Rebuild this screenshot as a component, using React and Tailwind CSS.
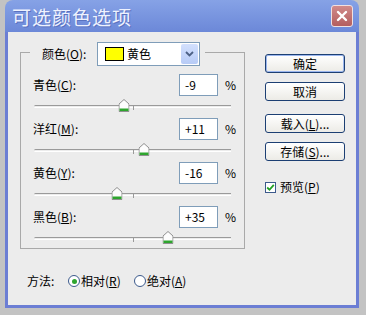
import React from 'react'

const ROWS = [
  { name: '青色', key: 'C', value: -9 },
  { name: '洋红', key: 'M', value: 11 },
  { name: '黄色', key: 'Y', value: -16 },
  { name: '黑色', key: 'B', value: 35 },
]

function Thumb() {
  return (
    <svg width="11" height="13" viewBox="0 0 11 13">
      <path d="M0.5 5 L5.5 0.5 L10.5 5 L10.5 12.5 L0.5 12.5 Z" fill="#fdfdfd" stroke="#8f8f8f" />
      <rect x="1" y="9.5" width="9" height="2.5" fill="#2ea52e" />
    </svg>
  )
}

function Slider({ value }) {
  return (
    <div className="relative ml-[13px] w-[197px] h-[3px] border-t border-b border-t-[#9a9a9a] border-b-white rounded-l-full">
      <div className="absolute left-1/2 top-0 w-px h-[4px] bg-[#9a9a9a]" />
      <div
        className="absolute -top-[7px] -translate-x-1/2 flex"
        style={{ left: `calc(50% + ${value}px)` }}
      >
        <Thumb />
      </div>
    </div>
  )
}

function Button({ children, focus }) {
  return (
    <div
      className={`w-[80px] h-[19px] rounded-[3px] border border-[#1c3f73] bg-gradient-to-b from-white to-[#ecebe6] flex items-center justify-center text-[12px] text-black ${focus ? 'shadow-[inset_0_0_0_1px_#9bb6ee]' : ''}`}
    >
      {children}
    </div>
  )
}

export default function App() {
  return (
    <div className="w-[366px] h-[315px] bg-[#c3c3c3] px-[5px] font-['Noto_Sans_CJK_SC','Noto_Sans',sans-serif] text-black">
      <div className="w-[354px] flex flex-col">
        {/* title bar */}
        <div className="h-[32px] rounded-t-[8px] bg-gradient-to-b from-[#86a2e6] to-[#6c88d8] flex items-center justify-between pl-[7px] pr-[6px]">
          <span className="text-[19px] leading-none text-[#eef2ff] tracking-[1px] [text-shadow:1px_1px_0_#5a72c0]">可选颜色选项</span>
          <div className="w-[22px] h-[22px] rounded-[3px] border border-[#f0e0e0] bg-gradient-to-b from-[#d08a8a] to-[#b45e5e] flex items-center justify-center">
            <svg width="12" height="12" viewBox="0 0 12 12">
              <path d="M2 2 L10 10 M10 2 L2 10" stroke="#fff" strokeWidth="2.4" strokeLinecap="round" />
            </svg>
          </div>
        </div>

        {/* body */}
        <div className="h-[276px] bg-[#ececec] border-x-[3px] border-b-[3px] border-[#6c7ed4] flex text-[12px]">
          <div className="flex flex-col pl-[12px] pt-[20px]">
            {/* group box */}
            <div className="w-[225px] h-[197px] border border-[#a9a9a9] flex flex-col">
              <div className="-mt-[11px] ml-[9px] w-fit bg-[#ececec] flex items-center pl-[12px] pr-[5px] h-[24px]">
                <span className="w-[55px]">颜色(<span className="underline">O</span>):</span>
                <div className="w-[103px] h-[24px] border border-[#7f9db9] bg-white flex items-center pl-[7px] pr-[1px]">
                  <div className="w-[19px] h-[14px] bg-[#ffff00] border border-black" />
                  <span className="ml-[3px] flex-1">黄色</span>
                  <div className="w-[17px] h-[20px] rounded-[2px] bg-gradient-to-b from-[#d3e0fd] to-[#b7cbf6] flex items-center justify-center">
                    <svg width="9" height="6" viewBox="0 0 9 6">
                      <path d="M1 1 L4.5 4.5 L8 1" stroke="#4d6185" strokeWidth="1.8" fill="none" />
                    </svg>
                  </div>
                </div>
              </div>
              <div className="mt-[8px] flex flex-col">
                {ROWS.map(r => (
                  <div key={r.key} className="flex flex-col h-[44px]">
                    <div className="flex items-center h-[22px] pl-[12px]">
                      <span className="w-[146px]">{r.name}(<span className="underline">{r.key}</span>):</span>
                      <div className="w-[39px] h-[22px] border border-[#7f9db9] bg-white flex items-center pl-[5px]">
                        {r.value > 0 ? `+${r.value}` : r.value}
                      </div>
                      <span className="ml-[7px]">%</span>
                    </div>
                    <div className="pt-[9px]">
                      <Slider value={r.value} />
                    </div>
                  </div>
                ))}
              </div>
            </div>

            {/* method */}
            <div className="mt-[25px] flex items-center h-[14px] pl-[7px]">
              <span className="w-[41px]">方法:</span>
              <div className="w-[12px] h-[12px] rounded-full border border-[#3c5a8c] bg-white flex items-center justify-center">
                <div className="w-[5px] h-[5px] rounded-full bg-[#2ea52e]" />
              </div>
              <span className="ml-[1px] w-[53px]">相对(<span className="underline">R</span>)</span>
              <div className="w-[12px] h-[12px] rounded-full border border-[#3c5a8c] bg-white" />
              <span className="ml-[1px]">绝对(<span className="underline">A</span>)</span>
            </div>
          </div>

          {/* buttons */}
          <div className="ml-[20px] pt-[22px] flex flex-col">
            <Button focus>确定</Button>
            <div className="mt-[9px]"><Button>取消</Button></div>
            <div className="mt-[13px]"><Button>载入(<span className="underline">L</span>)...</Button></div>
            <div className="mt-[9px]"><Button>存储(<span className="underline">S</span>)...</Button></div>
            <div className="mt-[17px] flex items-center">
              <div className="w-[11px] h-[11px] border border-[#3c5a8c] bg-white flex items-center justify-center">
                <svg width="9" height="9" viewBox="0 0 9 9">
                  <path d="M1.2 4.5 L3.5 6.8 L7.8 1.8" stroke="#22a022" strokeWidth="1.8" fill="none" />
                </svg>
              </div>
              <span className="ml-[4px]">预览(<span className="underline">P</span>)</span>
            </div>
          </div>
        </div>
      </div>
    </div>
  )
}
